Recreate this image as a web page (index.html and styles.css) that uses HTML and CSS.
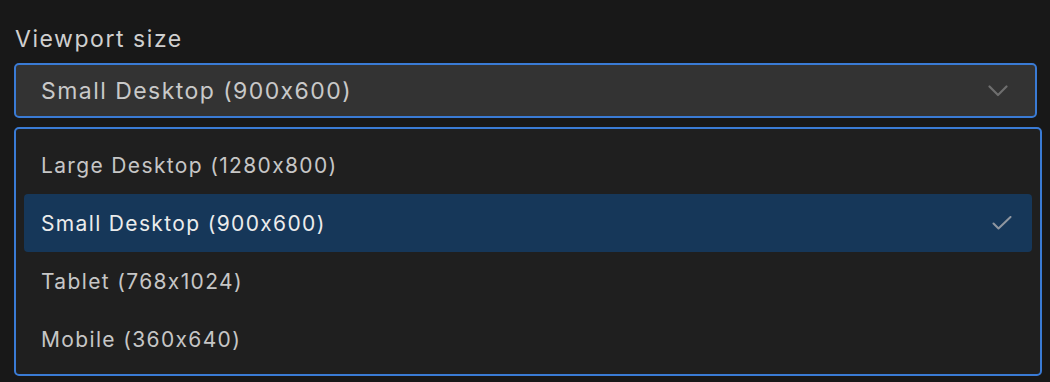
FILE: index.html
```html
<!DOCTYPE html>
<html lang="en">
<head>
<meta charset="utf-8">
<title>Viewport size</title>
<link rel="stylesheet" href="styles.css">
</head>
<body>
<div class="field">
  <div class="label">Viewport size</div>
  <div class="select">
    <span class="select-value">Small Desktop (900x600)</span>
    <svg class="chevron" width="20" height="12" viewBox="0 0 20 12"><path d="M1.5 1.5 L10 10 L18.5 1.5" fill="none" stroke="#6e6e6e" stroke-width="2.2" stroke-linecap="round" stroke-linejoin="round"/></svg>
  </div>
  <ul class="listbox">
    <li class="option">Large Desktop (1280x800)</li>
    <li class="option selected">Small Desktop (900x600)
      <svg class="check" width="20" height="14" viewBox="0 0 20 14"><path d="M1.5 7.5 L6.5 12.5 L18.5 1" fill="none" stroke="#8f96a0" stroke-width="2" stroke-linecap="round" stroke-linejoin="round"/></svg>
    </li>
    <li class="option">Tablet (768x1024)</li>
    <li class="option">Mobile (360x640)</li>
  </ul>
</div>
</body>
</html>
```

FILE: styles.css
```css
html, body {
  margin: 0;
  padding: 0;
  background: #181818;
}
body {
  font-family: Inter, "Noto Sans", sans-serif;
  font-feature-settings: "calt" 0;
  height: 382px;
  overflow: hidden;
}
.field {
  padding: 25px 8px 0 14px;
  display: flex;
  flex-direction: column;
}
.label {
  color: #cfcfcf;
  font-size: 23px;
  line-height: 29px;
  letter-spacing: 1.55px;
  padding-left: 1px;
  margin-bottom: 9px;
}
.select {
  height: 55px;
  box-sizing: border-box;
  margin-right: 5px;
  border: 2px solid #3a7bd5;
  border-radius: 5px;
  background: #333333;
  display: flex;
  align-items: center;
  justify-content: space-between;
  padding: 0 27px 0 25px;
}
.select-value {
  color: #c9c9c9;
  font-size: 23px;
  letter-spacing: 1.45px;
}
.chevron {
  display: block;
}
.listbox {
  list-style: none;
  margin: 9px 0 0 0;
  padding: 7px 8px 6px 8px;
  height: 249px;
  box-sizing: border-box;
  border: 2px solid #3a7bd5;
  border-radius: 5px;
  background: #1f1f1f;
}
.option {
  height: 58px;
  display: flex;
  align-items: center;
  justify-content: space-between;
  padding: 0 20px 0 17px;
  color: #c6c6c6;
  font-size: 21px;
  letter-spacing: 1.35px;
  border-radius: 4px;
}
.option.selected {
  background: #163759;
  color: #ececec;
}
.check {
  display: block;
}
```
